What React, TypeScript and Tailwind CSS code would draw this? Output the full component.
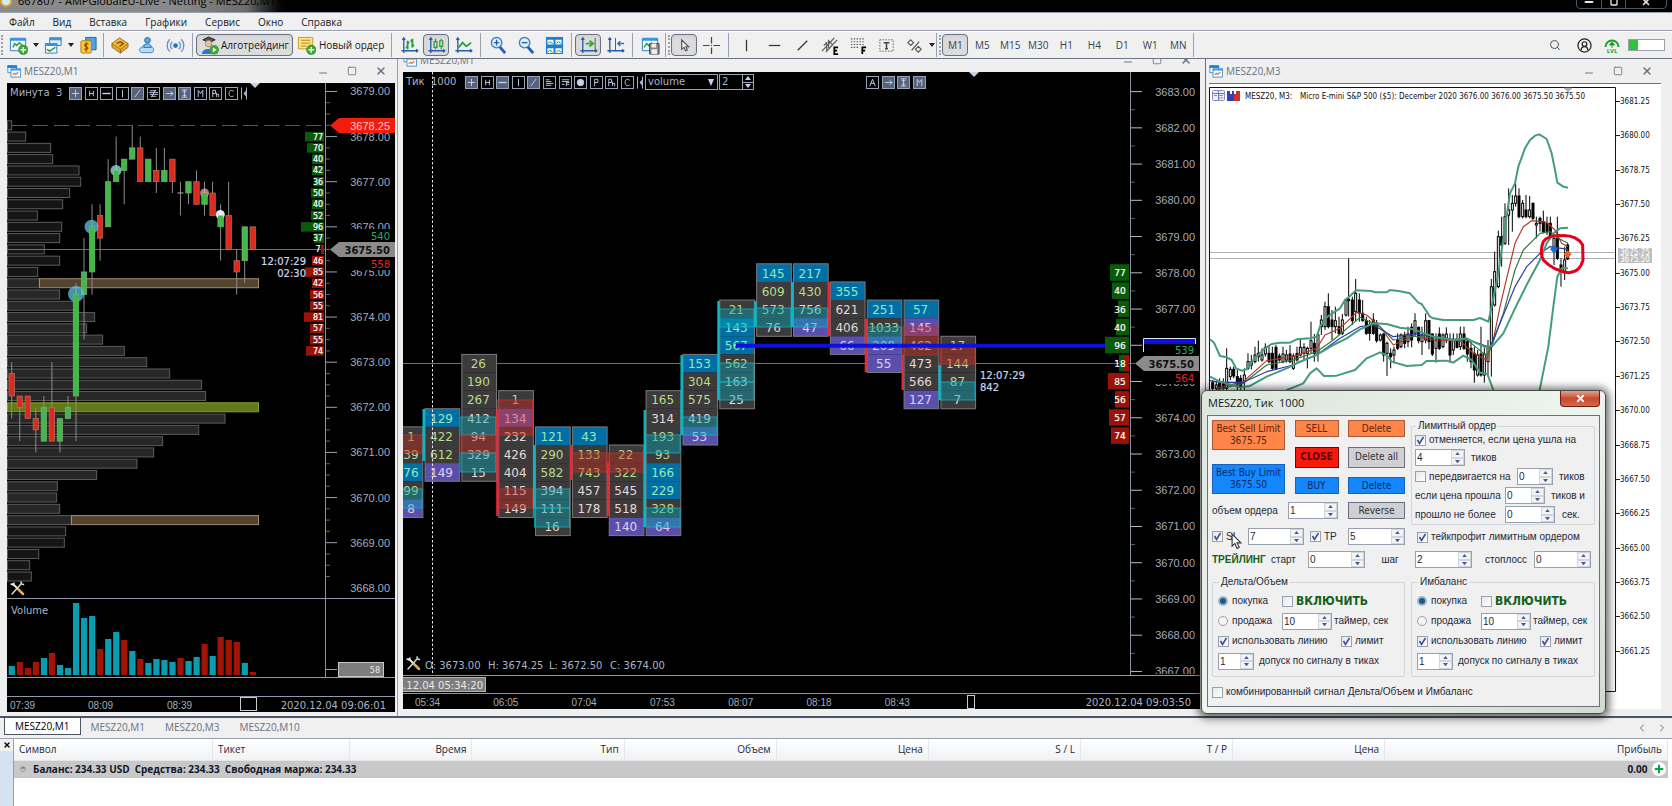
import { useState, type ReactNode } from "react";
import clsx from "clsx";
import {
  ChevronLeft,
  ChevronRight,
  Minus,
  Plus,
  Search,
  Square,
  X,
} from "lucide-react";

const menuItems = ["Файл", "Вид", "Вставка", "Графики", "Сервис", "Окно", "Справка"];
const timeframes = ["M1", "M5", "M15", "M30", "H1", "H4", "D1", "W1", "MN"];
const chartTabs = ["MESZ20,M1", "MESZ20,M1", "MESZ20,M3", "MESZ20,M10"];

const MONO = "DejaVu Sans, sans-serif";
const AXIS = "Liberation Sans, sans-serif";
const SMALL = "DejaVu Sans Condensed, DejaVu Sans, sans-serif";

/* ---------- left chart data (one unit = one quarter tick below 3678.25) ---------- */

const tickY = (i: number) => 125.3 + 11.28 * i;

const profile = [
  35, 77, 152, 158, 237, 242, 209, 188, 112, 185, 179, 133, 179, 113, 118, 179, 225, 284, 260, 308,
  373, 440, 509, 605, 617, 0, 675, 596, 488, 461, 411, 290, 172, 170, 179, 214, 197, 193, 116, 89, 94,
];

// high, body top, body bottom, low, up?
const candles: [number, number, number, number, number][] = [
  [21, 22, 24, 26, 0], [24, 24, 25, 28, 0], [24, 24, 26, 26, 0], [25, 26, 27, 29, 0],
  [24, 25, 28, 28, 1], [21, 25, 28, 28, 0], [26, 26, 28, 29, 1], [24, 25, 26, 26, 1],
  [14, 15, 24, 28, 1], [10, 13, 15, 19, 1], [7, 9, 13, 15, 1], [7, 8, 10, 12, 0],
  [3, 5, 9, 9, 1], [1, 4, 5, 5, 1], [3, 3, 4, 7, 1], [0, 2, 3, 3, 1],
  [1, 2, 5, 5, 0], [3, 3, 5, 5, 1], [2, 4, 5, 6, 0], [2, 4, 5, 5, 1],
  [3, 3, 5, 6, 0], [5, 6, 6, 8, 1], [5, 5, 6, 7, 1], [4, 5, 7, 7, 0],
  [5, 6, 7, 8, 1], [5, 6, 8, 8, 0], [7, 8, 9, 12, 1], [5, 8, 11, 11, 0],
  [11, 12, 13, 15, 0], [9, 9, 12, 14, 1], [9, 9, 11, 11, 0],
];

const volumes = [
  9, -13, -7, -13, 17, -22, 10, 7, 72, 57, 59, -26, 36, 43, -35, 24, -16, 12, 16, 15, 13, -17, 14,
  18, -31, 19, -38, -35, -33, 12, -3,
];

const leftBook: [string, number, number][] = [
  ["77", 19, 1], ["70", 17, 1], ["40", 12, 1], ["42", 12, 1], ["36", 10, 1], ["50", 13, 1],
  ["40", 12, 1], ["52", 13, 1], ["96", 23, 1], ["37", 10, 1], ["7", 3, 0], ["46", 12, 0],
  ["85", 19, 0], ["42", 12, 0], ["56", 14, 0], ["55", 14, 0], ["81", 20, 0], ["57", 14, 0],
  ["55", 14, 0], ["74", 18, 0],
];

/* ---------- middle chart data ---------- */

const rowY = (k: number) => 91.6 + 18.12 * k;
const colX = (i: number) => 425 + 36.85 * (i - 1);

// start row, cells (value + b: blue, p: purple, g: green text, w: white text)
const clusters: [number, string][] = [
  [19, "1g 39g 76b 99g 8p"],
  [18, "129b 422g 612g 149p"],
  [15, "26g 190g 267g 412w 94w 329w 15w"],
  [17, "1g 134p 232w 426w 404w 115w 149w"],
  [19, "121b 290g 582g 394w 111w 16w"],
  [19, "43b 133g 743g 457w 178w"],
  [20, "22g 322g 545w 518w 140p"],
  [17, "165g 314w 193g 93g 166b 229b 328g 64p"],
  [15, "153b 304g 575g 419w 53p"],
  [12, "21g 143b 567b 562g 163w 25w"],
  [10, "145b 609g 573g 76w"],
  [10, "217b 430g 756w 47p"],
  [11, "355b 621w 406w 66p"],
  [12, "251b 1033g 209p 55p"],
  [12, "57b 145p 462w 473w 566w 127p"],
  [14, "17g 144g 87g 7w"],
];

// column, y1, y2, buy?
const zones: [number, number, number, number][] = [
  [0, 435, 453, 0], [0, 489, 508, 1],
  [2, 417, 435, 1], [2, 435, 453, 0], [2, 453, 472, 1],
  [3, 400, 435, 0], [3, 489, 508, 0],
  [4, 489, 508, 1], [4, 508, 527, 1],
  [5, 453, 472, 0], [6, 453, 472, 0],
  [7, 435, 453, 1], [7, 508, 527, 1],
  [8, 417, 435, 1],
  [9, 309, 327, 1], [9, 363, 382, 1], [9, 382, 400, 1],
  [10, 308, 327, 1], [11, 308, 327, 1],
  [13, 327, 345, 1], [14, 327, 355, 0],
  [15, 346, 364, 0], [15, 382, 400, 1],
];

const deltaBars: [number, number, number, number][] = [
  [1, 409, 461, 1], [3, 410, 516, 0], [4, 445, 508, 1], [5, 445, 480, 0], [6, 463, 516, 0],
  [7, 410, 527, 1], [8, 355, 435, 1], [9, 301, 400, 1], [10, 301, 327, 1], [11, 282, 327, 1],
  [12, 282, 336, 0], [13, 319, 372, 0], [14, 355, 390, 0], [15, 365, 400, 1],
];

const midBook: [string, number, number][] = [
  ["77", 19, 1], ["40", 17, 1], ["36", 11, 1], ["40", 13, 1], ["96", 24, 1], ["18", 10, 1],
  ["85", 21, 0], ["56", 14, 0], ["57", 20, 0], ["74", 18, 0],
];

/* ---------- right chart data ---------- */

// x, high, body top, body bottom, low, filled
const bars: number[][] = [
  [38, 960, 968, 985, 990, 1], [49, 965, 975, 985, 995, 0], [59, 955, 970, 985, 995, 1], [70, 955, 968, 985, 1000, 1],
  [80, 865, 925, 985, 990, 0], [91, 920, 928, 950, 960, 0], [101, 920, 928, 948, 955, 1], [112, 930, 950, 975, 990, 1],
  [122, 945, 955, 980, 990, 1], [133, 925, 945, 965, 990, 0], [144, 880, 905, 925, 930, 0], [154, 885, 905, 915, 928, 0],
  [165, 860, 885, 905, 910, 0], [175, 842, 880, 890, 905, 0], [186, 865, 885, 900, 905, 0], [196, 850, 862, 882, 890, 0],
  [207, 855, 880, 905, 910, 1], [217, 860, 880, 925, 930, 1], [228, 855, 862, 925, 930, 1], [238, 880, 888, 900, 905, 1],
  [249, 860, 882, 905, 910, 0], [259, 870, 885, 900, 908, 0], [270, 855, 882, 905, 910, 1], [280, 880, 888, 925, 930, 0],
  [291, 860, 880, 900, 905, 1], [301, 840, 862, 885, 890, 0], [312, 850, 862, 880, 900, 0], [322, 860, 865, 880, 925, 0],
  [333, 785, 842, 865, 880, 0], [343, 822, 850, 880, 905, 1], [354, 820, 825, 880, 905, 0], [364, 765, 780, 800, 825, 0],
  [375, 725, 740, 800, 810, 0], [385, 700, 740, 800, 805, 1], [396, 750, 780, 800, 840, 1], [406, 740, 782, 800, 820, 0],
  [417, 770, 800, 820, 825, 1], [427, 762, 780, 820, 825, 0], [438, 715, 720, 765, 770, 0], [446, 595, 718, 722, 770, 0],
  [457, 710, 720, 782, 795, 1], [467, 657, 700, 755, 785, 0], [478, 700, 720, 760, 785, 1], [488, 720, 760, 782, 785, 1],
  [499, 770, 782, 820, 825, 1], [509, 780, 795, 820, 842, 1], [520, 760, 780, 820, 825, 1], [530, 780, 790, 842, 848, 1],
  [541, 820, 825, 840, 845, 0], [551, 820, 822, 885, 905, 1], [561, 845, 850, 880, 948, 0], [572, 865, 880, 890, 925, 1],
  [582, 860, 870, 885, 910, 0], [593, 820, 840, 865, 870, 1], [603, 820, 825, 860, 865, 0], [614, 815, 825, 850, 865, 1],
  [624, 800, 822, 845, 862, 0], [635, 790, 802, 840, 862, 1], [645, 760, 782, 820, 830, 0], [656, 800, 802, 842, 850, 1],
  [666, 800, 825, 845, 885, 0], [677, 760, 782, 840, 850, 0], [687, 780, 782, 845, 868, 1], [697, 820, 822, 882, 888, 1],
  [708, 820, 840, 865, 908, 0], [718, 802, 822, 865, 870, 1], [729, 820, 825, 860, 865, 0], [739, 802, 822, 842, 850, 0],
  [750, 820, 845, 885, 908, 1], [760, 820, 842, 870, 885, 0], [771, 820, 842, 862, 865, 1], [781, 800, 822, 860, 870, 0],
  [792, 800, 822, 865, 870, 1], [802, 840, 845, 882, 905, 1], [813, 845, 865, 905, 925, 1], [823, 860, 880, 930, 968, 1],
  [833, 870, 885, 945, 950, 0], [843, 800, 882, 945, 950, 1], [853, 862, 882, 945, 968, 0], [864, 840, 862, 905, 945, 0],
  [874, 657, 680, 860, 950, 0], [884, 575, 635, 735, 740, 0], [895, 512, 530, 680, 685, 0], [905, 470, 530, 555, 620, 1],
  [915, 430, 470, 550, 555, 0], [926, 385, 450, 465, 555, 0], [937, 405, 430, 450, 515, 0], [947, 370, 408, 430, 440, 0],
  [957, 385, 408, 470, 475, 1], [968, 420, 430, 470, 475, 0], [978, 405, 450, 470, 475, 1], [989, 408, 450, 470, 475, 0],
  [999, 428, 430, 475, 480, 1], [1009, 470, 490, 495, 535, 0], [1020, 470, 475, 490, 515, 1], [1030, 452, 485, 515, 520, 1],
  [1041, 470, 490, 515, 525, 1], [1051, 470, 490, 530, 538, 1], [1062, 530, 535, 560, 615, 0], [1072, 470, 535, 595, 600, 1],
  [1083, 595, 615, 630, 680, 1], [1094, 560, 600, 635, 660, 0], [1103, 550, 555, 597, 600, 1],
];

/* ---------- small pieces ---------- */

const Sep = ({ tight }: { tight?: boolean }) => (
  <span className={clsx("h-6 w-px shrink-0 bg-gray-400", tight ? "mx-px" : "mx-[3px]")} />
);

const Grip = () => (
  <span className="mx-px h-5 w-px shrink-0 border-l-2 border-dotted border-gray-400" />
);

const Tool = ({ label, active, children }: { label: string; active?: boolean; children: ReactNode }) => (
  <button
    aria-label={label}
    className={clsx(
      "flex h-[22px] shrink-0 items-center justify-center",
      active ? "w-[26px] rounded-sm border border-gray-500 bg-[#dcdcdc] shadow-inner" : "w-7"
    )}
  >
    {children}
  </button>
);

const Caret = ({ label }: { label: string }) => (
  <button aria-label={label} className="flex w-[7px] shrink-0 items-center justify-center">
    <svg viewBox="0 0 6 4" className="w-[6px]"><path d="M0 0h6L3 4z" fill="#222" /></svg>
  </button>
);

const Ico = ({ children }: { children: ReactNode }) => (
  <svg viewBox="0 0 20 20" className="size-[19px]" fill="none">{children}</svg>
);

const PlusBadge = () => (
  <>
    <circle cx="15" cy="14.5" r="5" fill="#3fa535" stroke="#2a7d22" strokeWidth=".6" />
    <path d="M15 11.5v6M12 14.5h6" stroke="#fff" strokeWidth="1.6" />
  </>
);

const Axes = () => (
  <path d="M4 2v16M1.500 15.500h17M2.500 4 4 2l1.500 2M17 14l1.700 1.500L17 17" stroke="#2a5bab" strokeWidth="1.400" />
);

const WindowIcon = () => (
  <svg viewBox="0 0 16 16" className="size-[14px] shrink-0" fill="none">
    <path d="M1 2h10v8H1z" fill="#fff" stroke="#2b8ad2" />
    <path d="M.5 1.500h11v3H.5z" fill="#1f7fcf" />
    <path d="M4.500 6h11v9h-11z" fill="#fff" stroke="#2b8ad2" />
    <path d="M4 5h12v2.500H4z" fill="#3d9be0" />
    <path d="m6.500 12.500 2-2 1.500 1.500 3-3" stroke="#e0662c" strokeWidth="1.300" />
  </svg>
);

const Wrench = ({ x, y }: { x: number; y: number }) => (
  <g transform={`translate(${x} ${y})`} fill="none" strokeLinecap="round">
    <path d="M3 3 8 8" stroke="#e8e8e8" strokeWidth="2" />
    <path d="m1 3 2 1 1-2" stroke="#e8e8e8" strokeWidth="1.500" />
    <path d="m8 8 5 5" stroke="#e2b050" strokeWidth="2.500" />
    <path d="M2 13 11 3M11 1l.5 2 2 .5" stroke="#d8d8d8" strokeWidth="1.500" />
  </g>
);

function WindowTitle({ title, clipped }: { title: string; clipped?: boolean }) {
  return (
    <div className={clsx("flex items-end overflow-hidden bg-[#efefef]", clipped ? "h-[13px]" : "h-6")}>
      <div className="flex h-6 w-full shrink-0 items-center gap-[3px] pr-2 pb-px text-[10px] leading-4 text-gray-500">
        <WindowIcon />
        <span className="flex-1">{title}</span>
        <div className="flex items-center gap-[18px] text-gray-500">
          <button aria-label="Свернуть окно"><Minus className="size-3 translate-y-0.5" /></button>
          <button aria-label="Развернуть окно"><Square className="size-[10px]" /></button>
          <button aria-label="Закрыть окно"><X className="size-3" strokeWidth={3} /></button>
        </div>
      </div>
    </div>
  );
}

const chipGlyphs: Record<string, ReactNode> = {
  plus: <path d="M6 2v8M2 6h8" />,
  H: <path d="M4 3v6M8 3v6M4 6h4" />,
  h: <path d="M1.500 6h9" strokeWidth="1.500" />,
  v: <path d="M6 2v8" />,
  d: <path d="m3 10 6-8" />,
  lines: <path d="M2 3h4M2 5h6M2 7h8M2 9h6" />,
  fibo: <path d="M2 3h8M2 5h8M2 8h3M7 10V6h3M7 8h3" />,
  level: <path d="M2 3h7M1 5h10M2 7h9M3 9h6M8 2 4 10" />,
  dot: <circle cx="6" cy="6" r="3.500" fill="currentColor" />,
  arrow: <path d="M2 6h8M7 3.500 10 6 7 8.500" />,
  I: <path d="M3 2h6M3 10h6M6 2v8M4 4h4M4 8h4" />,
  M: <path d="M3.500 10V2.500L6 6l2.500-3.500V10" />,
  P: <path d="M4 10V2.500h3.500V6H4" />,
  Ph: <path d="M3 10V2.500h3V6H3M7 5v5M7 7h2.500v3" />,
  C: <path d="M8.500 3.500C4 1 3 4.500 3.500 7c.5 3 3.500 3 5 1.500" />,
  A: <path d="m3 10 3-7.500L9 10M4 7h4" />,
};

function Chip({ kind, on }: { kind: string; on?: boolean }) {
  return (
    <button
      aria-label={`Инструмент ${kind}`}
      className={clsx(
        "flex size-[13px] shrink-0 items-center justify-center border border-[#98a4b8] text-[#c4d2ea]",
        on ? "bg-[#56637a]" : "bg-black"
      )}
    >
      <svg viewBox="0 0 12 12" className="size-[11px]" fill="none" stroke="currentColor">{chipGlyphs[kind]}</svg>
    </button>
  );
}

const Collapse = () => (
  <button aria-label="Свернуть панель" className="ml-[3px] shrink-0">
    <svg viewBox="0 0 6 12" className="h-[13px] w-[6px]" fill="#a9b4c8">
      <path d="M0 0h1v12H0zM5 3v6L2.500 6z" /><path d="M5 0h1v12H5z" />
    </svg>
  </button>
);

/* ---------- charts ---------- */

function PriceTag({ x, y, w, text }: { x: number; y: number; w: number; text: string }) {
  return (
    <>
      <path d={`M${x} ${y}l9-7.500h${w - 9}v15h-${w - 9}z`} fill="#8b8b8b" />
      <text x={x + w - 5} y={y + 4} textAnchor="end" fontFamily={MONO} fontSize="10" fontWeight="bold" fill="#111">{text}</text>
    </>
  );
}

function ProfileChart() {
  return (
    <svg viewBox="7 83 388 629" className="block w-full bg-black">
      {profile.map((w, i) =>
        w ? (
          <rect key={i} x="7.500" y={tickY(i) - 4.500} width={w / 3 - 7.500} height="9"
            fill={i > 13 && i < 36 ? "#272727" : "#151515"} stroke="#5c5c5c" />
        ) : null
      )}
      <rect x="39.500" y={tickY(14) - 4.500} width="219" height="9" fill="#54432f" stroke="#a58c6c" />
      <rect x="71.500" y={tickY(35) - 4.500} width="187" height="9" fill="#54432f" stroke="#a58c6c" />
      <rect x="7.500" y={tickY(25) - 4.500} width="251" height="9" fill="#5f7a17" stroke="#84a529" />
      <path d="M12 125.500H326" stroke="#c52a20" strokeDasharray="15 6" />
      <path d="M7 249.500H330" stroke="#6b6f78" />
      {candles.map(([h, t, b, l, up], i) => {
        const x = 11.700 + i * 8.035;
        return (
          <g key={i}>
            <path d={`M${x} ${tickY(h)}V${tickY(l)}`} stroke="#8c8c8c" />
            {t === b ? (
              <path d={`M${x - 3} ${tickY(t)}h6`} stroke="#b0b0b0" />
            ) : (
              <rect x={x - 2.700} y={tickY(t)} width="5.400" height={tickY(b) - tickY(t)}
                fill={up ? "#44b64a" : "#dc2a1c"} stroke={up ? "#7fae80" : "#a87868"} strokeWidth=".7" />
            )}
          </g>
        );
      })}
      <g fill="#62c4dc" fillOpacity=".75">
        <circle cx="76" cy={tickY(15) - 0.5} r="8" />
        <circle cx="91.500" cy={tickY(9)} r="7" />
        <circle cx="116" cy={tickY(4)} r="5.500" fill="#a4e0e8" />
        <circle cx="204.600" cy={tickY(6)} r="4.500" fill="#eba4a0" />
        <circle cx="220.300" cy={tickY(8) - 1} r="4.500" fill="#fff" fillOpacity=".9" />
      </g>
      {[[8, 15, 24], [10, 9, 13], [13, 4, 5], [24, 6, 7], [26, 8, 9]].map(([i, t, b]) => (
        <rect key={i} x={9 + i * 8.035} y={tickY(t)} width="5.400" height={tickY(b) - tickY(t)} fill="#44b64a" />
      ))}
      <g fontFamily={MONO} fontSize="9" fill="#fff" textAnchor="middle">
        {leftBook.map(([v, w, buy], i) => (
          <g key={i}>
            <rect x={324 - w} y={tickY(i + 1) - 4.700} width={w} height="9.500" fill={buy ? "#0b5a0b" : "#9a1208"} />
            <text x="318" y={tickY(i + 1) + 3} fontSize="8" stroke="#fff" strokeWidth=".2">{v}</text>
          </g>
        ))}
      </g>
      <g fontFamily={MONO} fontSize="10" fill="#c8d6ee" textAnchor="end" stroke="#c8d6ee" strokeWidth=".2">
        <text x="306" y="265">12:07:29</text>
        <text x="306" y="276.500">02:30</text>
      </g>
      <path d="M325.500 83V677" stroke="#8891a5" />
      {Array.from({ length: 44 }, (_, i) => i - 3).map((i) => (
        <path key={i} d={`M326 ${tickY(i)}h${(i - 1) % 4 ? 4 : 11}`} stroke={(i - 1) % 4 ? "#5a6070" : "#9aa2b4"} />
      ))}
      <g fontFamily={AXIS} fontSize="11" fill="#a3abbd" textAnchor="end">
        {Array.from({ length: 12 }, (_, i) => (
          <text key={i} x="390" y={tickY(1) + (i - 1) * 45.12 + 4}>{`${3679 - i}.00`}</text>
        ))}
        <rect x="345" y="229" width="50" height="13" fill="#000" />
        <rect x="345" y="257" width="50" height="13" fill="#000" />
        <path d="M330 125.500l9-7.500h56v15h-56z" fill="#f01c0c" />
        <text x="390" y="129.500" fill="#ffc8c0">3678.25</text>
        <text x="390" y="240" fontFamily={MONO} fontSize="10" fill="#22b060">540</text>
        <text x="390" y="268" fontFamily={MONO} fontSize="10" fill="#e0281c">558</text>
      </g>
      <PriceTag x={330} y={249.500} w={65} text="3675.50" />
      <path d="M250 83h10l-5 5z" fill="#c4d2ea" />
      <Wrench x={10} y={581} />
      <path d="M7 598.500H395M7 677.500H395M7 696.500H395" stroke="#9098aa" />
      <text x="11" y="614" fontFamily={MONO} fontSize="10" fill="#a9b4c8">Volume</text>
      {volumes.map((v, i) => (
        <rect key={i} x={8.700 + i * 8.035} y={675 - Math.abs(v)} width="6.200" height={Math.abs(v)}
          fill={v > 0 ? "#0a9cb0" : "#a2140a"} />
      ))}
      <path d="M326 669.500h11" stroke="#9aa2b4" />
      <rect x="338.500" y="662.500" width="45" height="14" fill="#7d7d7d" stroke="#c8c8c8" />
      <text x="380" y="673" textAnchor="end" fontFamily={MONO} fontSize="8" fill="#e8e8e8">58</text>
      <g fontFamily={AXIS} fontSize="10" fill="#a3abbd">
        <text x="10" y="708.500">07:39</text>
        <text x="88" y="708.500">08:09</text>
        <text x="167" y="708.500">08:39</text>
      </g>
      <rect x="240.500" y="697.500" width="16" height="13" stroke="#c4ccdc" fill="none" />
      <text x="386" y="709" textAnchor="end" fontFamily={MONO} fontSize="10" fill="#a9b4c8">2020.12.04 09:06:01</text>
    </svg>
  );
}

const cellFill: Record<string, string> = { b: "#006fa6", p: "#5a50ac", g: "#3d3a3c", w: "#3d3a3c" };
const cellText: Record<string, string> = { b: "#90ecb8", p: "#e0d0f0", g: "#b8dc88", w: "#e4d8d8" };

function ClusterChart() {
  return (
    <svg viewBox="403 72 797 637" className="block w-full bg-black">
      <path d="M403 363.500H1135" stroke="#6b6f78" />
      {clusters.map(([start, cells], i) => {
        const list = cells.split(" ");
        const x = colX(i);
        return (
          <g key={i}>
            {list.map((cell, j) => (
              <rect key={j} x={x} y={rowY(start + j) - 9} width="34.700" height="18.200" fill={cellFill[cell.slice(-1)]} />
            ))}
            <rect x={x} y={rowY(start) - 9} width="34.700" height={list.length * 18.12} fill="none" stroke="#7a7a7a" />
            {list.map((cell, j) => (
              <text key={j} x={i ? x + 16.500 : 411} y={rowY(start + j) + 4.800} textAnchor="middle"
                fontFamily={MONO} fontSize="12" fill={cellText[cell.slice(-1)]}>{cell.slice(0, -1)}</text>
            ))}
          </g>
        );
      })}
      {zones.map(([c, y1, y2, buy], i) => (
        <rect key={i} x={colX(c) - 1} y={y1} width="35" height={y2 - y1} fillOpacity=".42" strokeOpacity=".8"
          fill={buy ? "#04a8b4" : "#cc2c1c"} stroke={buy ? "#12b4c4" : "#c4302c"} />
      ))}
      {deltaBars.map(([c, y1, y2, buy], i) => (
        <rect key={i} x={colX(c) - 2.500} y={y1} width="2.500" height={y2 - y1} fill={buy ? "#12b4c4" : "#e02c38"} />
      ))}
      <path d="M736 345.700H1106" stroke="#0a10e0" strokeWidth="4" />
      <path d="M432.500 72V675" stroke="#e8e8e8" strokeDasharray="2.500 2" />
      <g fontFamily={MONO} fontSize="10" fill="#c8d6ee" stroke="#c8d6ee" strokeWidth=".2">
        <text x="980" y="379">12:07:29</text>
        <text x="980" y="390.500">842</text>
      </g>
      <g fontFamily={MONO} fontSize="9" fill="#fff" stroke="#fff" strokeWidth=".2" textAnchor="middle">
        {midBook.map(([v, w, buy], i) => (
          <g key={i}>
            <rect x={1129 - w} y={rowY(10 + i) - 8.500} width={w} height="16.500" fill={buy ? "#0b5a0b" : "#9a1208"} stroke="none" />
            {i === 5 && <rect x="1124" y={rowY(15) - 8.500} width="5" height="16.500" fill="#9a1208" stroke="none" />}
            <text x="1120" y={rowY(10 + i) + 3.500}>{v}</text>
          </g>
        ))}
      </g>
      <path d="M1130.500 72V675" stroke="#8891a5" />
      {Array.from({ length: 33 }, (_, i) => (
        <path key={i} d={`M1131 ${rowY(i)}h${i % 2 ? 4 : 11}`} stroke={i % 2 ? "#5a6070" : "#b4bccc"} />
      ))}
      <g fontFamily={AXIS} fontSize="11" fill="#a3abbd" textAnchor="end">
        {Array.from({ length: 17 }, (_, i) => (
          <text key={i} x="1195" y={rowY(2 * i) + 4}>{`${3683 - i}.00`}</text>
        ))}
        <rect x="1143" y="338" width="54" height="18" fill="#000" />
        <path d="M1143.500 352V338.500H1195.500V344" stroke="#e0e4f0" fill="none" />
        <rect x="1144" y="339" width="51" height="5" fill="#0a10e0" />
        <rect x="1150" y="371" width="49" height="13" fill="#000" />
        <text x="1194" y="354" fontFamily={MONO} fontSize="10" fill="#22b060">539</text>
        <text x="1194" y="381.500" fontFamily={MONO} fontSize="10" fill="#e0281c">564</text>
      </g>
      <PriceTag x={1135} y={363.500} w={64} text="3675.50" />
      <rect x="1132" y="674" width="70" height="3" fill="#000" />
      <path d="M969 72h10l-5 5z" fill="#c4d2ea" />
      <Wrench x={406} y={656} />
      <g fontFamily={MONO} fontSize="10" fill="#a9b4c8">
        <text x="425" y="668.500">O: 3673.00</text>
        <text x="488" y="668.500">H: 3674.25</text>
        <text x="549" y="668.500">L: 3672.50</text>
        <text x="610" y="668.500">C: 3674.00</text>
      </g>
      <path d="M403 675.500H1200M403 693.500H1200" stroke="#9098aa" />
      <rect x="402.500" y="677.500" width="83" height="14" fill="#7d7d7d" stroke="#b4b4b4" />
      <text x="483" y="688.500" textAnchor="end" fontFamily={MONO} fontSize="10" fill="#e8e8e8">.12.04 05:34:20</text>
      <g fontFamily={AXIS} fontSize="10" fill="#a3abbd">
        {["05:34", "06:05", "07:04", "07:53", "08:07", "08:18", "08:43"].map((t, i) => (
          <text key={t} x={415 + i * 78.3} y="705.500">{t}</text>
        ))}
      </g>
      <rect x="967.500" y="695.500" width="7" height="13" stroke="#c4ccdc" fill="none" />
      <text x="1191" y="706" textAnchor="end" fontFamily={MONO} fontSize="10" fill="#a9b4c8">2020.12.04 09:03:50</text>
    </svg>
  );
}

function BandsChart() {
  return (
    <svg viewBox="1209 87 452 622" className="block w-full bg-white">
      <path d="M1209.500 692V87.500H1615.500V691.500H1209" fill="none" stroke="#111" />
      <path d="M1210 252.500H1615M1210 258.500H1615" stroke="#b0b0b0" />
      <g transform="translate(1200 60) scale(.33333)" fill="none">
        {bars.map(([x, h, t, b, l, f]) => (
          <g key={x} stroke="#000" strokeWidth="3">
            <path d={`M${x} ${h}V${l}`} />
            <rect x={x - 3} y={t} width="6" height={Math.max(b - t, 1)} fill={f ? "#000" : "#fff"} />
          </g>
        ))}
        <g strokeWidth="3.500" strokeLinejoin="round">
          <path stroke="#b03a2a" d="M50 985L130 965 200 902 280 890 350 865 375 825 420 805 470 757 500 765 540 800 580 855 640 828 700 840 780 842 820 880 860 900 880 840 900 740 945 550 970 500 995 482 1040 487 1065 510 1085 550 1104 560" />
          <path stroke="#2f7a3c" d="M50 990L130 970 200 915 280 900 350 875 400 840 480 772 540 800 580 840 640 828 760 840 800 838 860 888 880 845 910 760 945 630 970 570 1020 520 1050 515 1075 535 1104 550" />
          <path stroke="#2f3aa8" d="M30 962L60 967 130 967 200 935 280 915 350 885 420 835 480 800 520 795 580 830 650 822 760 838 800 838 870 862 900 790 945 680 980 620 1020 580 1050 560 1104 568" />
        </g>
        <g stroke="#459c7c" strokeWidth="6" strokeLinejoin="round">
          <path d="M30 838L42 848 60 888 80 892 95 900 108 925 125 932 140 928 155 905 175 885 195 865 215 852 240 848 270 848 290 838 330 835 350 830 360 800 380 772 400 758 420 745 435 720 450 708 468 691 515 693 525 697 560 697 570 690 600 694 630 700 655 728 665 732 690 770 700 775 730 780 820 780 840 774 865 785 875 740 885 690 895 640 915 500 930 400 945 370 955 320 975 265 990 240 1005 227 1018 223 1040 237 1055 280 1065 330 1072 368 1090 380 1104 383" />
          <path d="M30 950L60 965 120 982 150 978 200 950 260 925 300 905 350 885 400 855 440 835 480 808 520 790 560 792 600 803 640 808 700 830 760 840 800 835 830 850 860 862 880 855 910 820 945 745 985 665 1020 600 1040 550 1060 520 1080 505 1104 503" />
          <path d="M235 1010L265 988 310 970 330 940 350 925 372 948 410 947 465 930 500 895 540 877 560 885 575 905 620 918 665 915 680 903 740 902 760 908 790 887 815 900 840 938 862 942 880 990Q950 1250 1020 985L1045 860 1060 740 1072 650 1085 625 1104 625" />
        </g>
        <path d="M1062 556 1074 568 1062 580 1050 568z" fill="#1a6cc8" />
        <path d="M1103 571 1115 583 1103 595 1091 583z" fill="#e8622c" />
        <path stroke="#e2001a" strokeWidth="9" strokeLinejoin="round" d="M1030 545Q1045 525 1085 527Q1130 525 1148 555L1149 600Q1140 637 1105 638Q1060 632 1030 600Q1018 575 1030 545z" />
        <path d="M1090 83h28l-14 14z" fill="#b0b0b0" />
      </g>
      <g>
        <rect x="1212.500" y="90.500" width="12" height="10" rx="1" fill="#eef" stroke="#8890b8" />
        <path d="M1213 93.500h11M1218.500 91v9" stroke="#6878c0" />
        <path d="M1219 95.500h4M1219 98h4M1214 95.500h3" stroke="#d88040" />
        <path d="M1227 91h3v3h2v-3h2v10h-7z" fill="#2c44b4" />
        <path d="M1234 94h2v-3h4v10h-6z" fill="#d03030" />
      </g>
      <g fontFamily={SMALL} fontSize="8" fill="#111">
        <text x="1245" y="99">MESZ20, M3:</text>
        <text x="1300" y="99">Micro E-mini S&amp;P 500 ($5): December 2020</text>
        <text x="1585" y="99" textAnchor="end">3676.00 3676.00 3675.50 3675.50</text>
        {Array.from({ length: 17 }, (_, i) => (
          <g key={i}>
            <path d={`M1616 ${Math.round(101 + i * 34.35)}.5h4`} stroke="#222" />
            <text x="1620" y={104 + i * 34.35}>{(3681.25 - i * 1.25).toFixed(2)}</text>
          </g>
        ))}
        <rect x="1618" y="248" width="34" height="15" fill="#bfbfbf" />
        <g fill="#fff">
          <text x="1620" y="254.500">3675.75</text>
          <text x="1620" y="261.500">3675.50</text>
        </g>
      </g>
    </svg>
  );
}

/* ---------- order dialog ---------- */

function Check({ label, on = false, textClass, className }: { label: string; on?: boolean; textClass?: string; className?: string }) {
  return (
    <label className={clsx("flex items-center gap-[3px] whitespace-nowrap", className)}>
      <span className="relative block size-[11px] shrink-0">
        <input type="checkbox" defaultChecked={on} className="peer block size-[11px] appearance-none border border-gray-400 bg-gradient-to-br from-gray-200 to-white" />
        <svg viewBox="0 0 11 11" fill="none" className="pointer-events-none absolute inset-0 hidden peer-checked:block">
          <path d="M2.500 5 4.500 8.500 8.500 2" stroke="#3b4f9a" strokeWidth="1.600" />
        </svg>
      </span>
      <span className={textClass}>{label}</span>
    </label>
  );
}

function RadioItem({ label, name, on }: { label: string; name: string; on?: boolean }) {
  return (
    <label className="flex w-16 shrink-0 items-center gap-1">
      <input type="radio" name={name} defaultChecked={on}
        className="size-[10px] shrink-0 appearance-none rounded-full border border-gray-400 bg-gray-100 checked:border-2 checked:border-[#9fb4c8] checked:bg-[#1c5c8c]" />
      {label}
    </label>
  );
}

function Spin({ label, value, className }: { label: string; value: string; className: string }) {
  return (
    <span className={clsx("flex h-[17px] shrink-0 items-stretch border border-gray-400 bg-white", className)}>
      <input aria-label={label} defaultValue={value} className="w-0 min-w-0 flex-1 pl-px text-[10px] leading-none text-gray-800 outline-none" />
      <span className="flex w-[13px] flex-col">
        <button aria-label="Больше" className="flex flex-1 items-center justify-center border border-gray-300 bg-gray-100">
          <svg viewBox="0 0 6 4" className="w-[5px]"><path d="M0 4h6L3 0z" fill="#4a5a94" /></svg>
        </button>
        <button aria-label="Меньше" className="flex flex-1 items-center justify-center border border-gray-300 bg-gray-100">
          <svg viewBox="0 0 6 4" className="w-[5px]"><path d="M0 0h6L3 4z" fill="#4a5a94" /></svg>
        </button>
      </span>
    </span>
  );
}

const btn = "flex items-center justify-center border text-center font-['DejaVu_Sans_Condensed','DejaVu_Sans',sans-serif] text-[10px] leading-3 whitespace-nowrap";
const sellBtn = "border-[#a85a34] bg-[#ff8548] text-[#5a2410]";
const buyBtn = "border-[#1a62b8] bg-[#1487ff] text-[#0c2860]";
const grayBtn = "border-gray-500 bg-[#d0d0d2] text-[#303038]";

function SignalGroup({ title, id, className }: { title: string; id: string; className: string }) {
  return (
    <fieldset className={clsx("min-w-0 rounded-xs border border-gray-300 pb-[5px] pl-[5px]", className)}>
      <legend className="ml-px px-[2px] leading-3">{title}</legend>
      <div className="mt-[3px] flex h-5 items-center">
        <RadioItem name={id} label="покупка" on />
        <Check label="ВКЛЮЧИТЬ" textClass="font-['DejaVu_Sans_Condensed','DejaVu_Sans',sans-serif] text-[12px] font-bold text-[#14601c]" />
      </div>
      <div className="flex h-5 items-center">
        <RadioItem name={id} label="продажа" />
        <Spin label="таймер, сек" value="10" className="w-[50px]" />
        <span className="ml-[2px] whitespace-nowrap">таймер, сек</span>
      </div>
      <div className="flex h-5 items-center">
        <Check label="использовать линию" on className="w-[123px]" />
        <Check label="лимит" on />
      </div>
      <div className="flex h-5 items-center gap-[5px]">
        <Spin label="допуск по сигналу в тиках" value="1" className="w-9" />
        <span className="whitespace-nowrap">допуск по сигналу в тиках</span>
      </div>
    </fieldset>
  );
}

function OrderDialog() {
  return (
    <div role="dialog" aria-label="MESZ20, Тик 1000"
      className="absolute top-[331px] right-[66px] flex w-[405px] flex-col rounded-md border border-[#454b46] bg-gradient-to-br from-[#dbe5dc] via-[#eef4ee] to-[#cfdcd0] px-[5px] pb-[6px] shadow-[0_1px_8px_3px_rgba(0,0,0,0.6)]">
      <div className="flex h-6 items-start justify-between pl-px">
        <span className="pt-1 text-[11px] leading-4 text-gray-900 font-['Open_Sans',sans-serif] whitespace-pre">MESZ20, Тик  1000</span>
        <button aria-label="Закрыть" className="flex h-4 w-10 items-center justify-center rounded-b border border-t-0 border-[#702018] bg-gradient-to-b from-[#e0a090] via-[#c84830] to-[#d86848] text-white">
          <X className="size-[11px]" strokeWidth={4} />
        </button>
      </div>
      <div className="border border-gray-500 bg-[#f0f0f0] px-1 pt-1 pb-2 font-['Liberation_Sans',sans-serif] text-[10px] leading-3 text-gray-800">
        <div className="flex gap-[6px]">
          <div className="w-[193px] shrink-0">
            <div className="flex h-[74px] justify-between">
              <div className="flex w-[73px] flex-col justify-between">
                <button className={clsx(btn, sellBtn, "h-[30px] text-[9px]")}>Best Sell Limit<br />3675.75</button>
                <button className={clsx(btn, buyBtn, "h-[30px] text-[9px]")}>Best Buy Limit<br />3675.50</button>
              </div>
              <div className="flex w-11 flex-col justify-between">
                <button className={clsx(btn, sellBtn, "h-[17px]")}>SELL</button>
                <button className={clsx(btn, "h-[21px] border-[#700] bg-[#f8180c] font-bold text-[#5a0808]")}>CLOSE</button>
                <button className={clsx(btn, buyBtn, "h-[17px]")}>BUY</button>
              </div>
              <div className="flex w-[57px] flex-col justify-between">
                <button className={clsx(btn, sellBtn, "h-[17px]")}>Delete</button>
                <button className={clsx(btn, grayBtn, "h-[21px]")}>Delete all</button>
                <button className={clsx(btn, buyBtn, "h-[17px]")}>Delete</button>
              </div>
            </div>
            <div className="mt-2 flex items-center">
              <span className="w-[76px]">объем ордера</span>
              <Spin label="объем ордера" value="1" className="w-[50px]" />
              <button className={clsx(btn, grayBtn, "ml-auto h-[17px] w-[57px]")}>Reverse</button>
            </div>
            <div className="mt-[9px] flex items-center">
              <Check label="SL" on className="w-9" />
              <Spin label="SL" value="7" className="w-14" />
              <Check label="TP" on className="ml-[6px]" />
              <Spin label="TP" value="5" className="ml-auto w-[57px]" />
            </div>
          </div>
          <div className="min-w-0 flex-1">
            <fieldset className="min-w-0 rounded-xs border border-gray-300 pl-[3px]">
              <legend className="ml-px px-[2px] leading-3">Лимитный ордер</legend>
              <div className="flex h-4 items-center">
                <Check label="отменяется, если цена ушла на" on />
              </div>
              <div className="flex h-[19px] items-center gap-[6px]">
                <Spin label="тиков до отмены" value="4" className="w-[50px]" />
                <span>тиков</span>
              </div>
              <div className="flex h-[19px] items-center">
                <Check label="передвигается на" className="w-[102px]" />
                <Spin label="передвигается на" value="0" className="w-9" />
                <span className="ml-[6px]">тиков</span>
              </div>
              <div className="flex h-[19px] items-center">
                <span className="w-[90px] whitespace-nowrap">если цена прошла</span>
                <Spin label="если цена прошла" value="0" className="w-10" />
                <span className="ml-[6px] whitespace-nowrap">тиков и</span>
              </div>
              <div className="flex h-[19px] items-center">
                <span className="w-[90px] whitespace-nowrap">прошло не более</span>
                <Spin label="прошло не более" value="0" className="w-[50px]" />
                <span className="ml-[7px]">сек.</span>
              </div>
            </fieldset>
            <Check label="тейкпрофит лимитным ордером" on className="mt-[6px] pl-[6px]" />
          </div>
        </div>
        <div className="mt-[6px] flex items-center">
          <span className="w-[59px] text-[10px] font-bold text-[#14601c]">ТРЕЙЛИНГ</span>
          <span className="w-[37px]">старт</span>
          <Spin label="старт" value="0" className="w-[57px]" />
          <span className="w-[50px] text-center">шаг</span>
          <Spin label="шаг" value="2" className="w-[57px]" />
          <span className="w-[62px] pl-[13px]">стоплосс</span>
          <Spin label="стоплосс" value="0" className="w-[57px]" />
        </div>
        <div className="mt-2 flex gap-[6px]">
          <SignalGroup title="Дельта/Объем" id="delta" className="w-[193px] shrink-0" />
          <SignalGroup title="Имбаланс" id="imbalance" className="flex-1" />
        </div>
        <Check label="комбинированный сигнал Дельта/Объем и Имбаланс" className="mt-[9px]" />
      </div>
      <svg viewBox="0 0 10 15" className="pointer-events-none absolute top-[142px] left-[29px] w-[11px]">
        <path d="M1 1v11l2.500-2.500 2 4.500 2-1-2-4H9z" fill="#fff" stroke="#333" />
      </svg>
    </div>
  );
}

/* ---------- main toolbar ---------- */

function Toolbar({ frame, setFrame }: { frame: string; setFrame: (f: string) => void }) {
  return (
    <div className="flex h-[27px] items-center border-t border-white bg-[#f0f0f0]">
      <Grip />
      <Tool label="Новый график">
        <Ico>
          <path d="M1.500 2.500h16v13h-16z" fill="#f4faff" stroke="#2d7fc4" /><path d="M1 2h17v3H1z" fill="#3a94dc" />
          <path d="m4 12 2-4 2 2 3-3 3 3" stroke="#2c9a3c" strokeWidth="1.500" /><PlusBadge />
        </Ico>
      </Tool>
      <Caret label="Список графиков" />
      <Tool label="Профили">
        <Ico>
          <path d="M6 2h12v8H6z" fill="#d8ecfc" stroke="#2d7fc4" /><path d="M6 1.500h12.500v3H6z" fill="#3a94dc" />
          <path d="M1.500 8h12v10h-12z" fill="#f4faff" stroke="#2d7fc4" /><path d="M1 7.500h13v3H1z" fill="#3a94dc" />
          <path d="m3 14 3 2 6-4" stroke="#2c9a3c" strokeWidth="1.500" />
        </Ico>
      </Tool>
      <Caret label="Список профилей" />
      <Tool label="Обзор рынка">
        <Ico>
          <path d="M7 1.500h11v13H7z" fill="#4aa2e8" stroke="#1f68b0" />
          <rect x="2" y="5" width="11" height="13" rx="1.500" fill="#f8c840" stroke="#b87c10" />
          <path d="M10 8.500c-4-1.500-5 2-2.500 2.700s3 3.500-2 2.500M7.500 6.500v10" stroke="#8a4c04" strokeWidth="1.300" />
        </Ico>
      </Tool>
      <Sep tight />
      <Tool label="Маркет">
        <Ico>
          <path d="m2 8 8-6 9 6-8 9z" fill="#f0bc38" stroke="#9a6c10" /><path d="m2 8 9 6v4l-9-6zM11 14l8-6v4l-8 6z" fill="#e0a830" stroke="#8a5c08" strokeWidth=".7" />
          <path d="m7 8 4-2 3 2-4 3" stroke="#7a4c04" strokeWidth="1.500" />
        </Ico>
      </Tool>
      <Tool label="Облако">
        <Ico>
          <path d="M4 17.500c-4-1-2.500-6 .5-5.500 1-4 6-4 7-1 5-1 6.500 5 3 6.500z" fill="#b8dcf8" stroke="#3c86cc" />
          <circle cx="10" cy="4.500" r="3" fill="#5aa4e4" stroke="#2c6cb0" /><path d="M6 12c0-5 8-5 8 0z" fill="#8cc4f0" stroke="#2c6cb0" />
        </Ico>
      </Tool>
      <Tool label="Сигналы">
        <Ico>
          <circle cx="10" cy="10" r="2.500" fill="#2c6cd0" />
          <path d="M6.500 6a5.500 5.500 0 0 0 0 8M13.500 6a5.500 5.500 0 0 1 0 8M4 3.500a9 9 0 0 0 0 13M16 3.500a9 9 0 0 1 0 13" stroke="#5c94dc" strokeWidth="1.400" />
        </Ico>
      </Tool>
      <Sep />
      <button className="flex h-[22px] shrink-0 items-center gap-[2px] rounded-sm border border-gray-500 bg-[#dcdcdc] px-[3px] shadow-inner">
        <Ico>
          <path d="m3 4 6-3 7 3-6 3z" fill="#555" stroke="#222" /><circle cx="9" cy="8" r="3.500" fill="#e8c4a0" stroke="#7a5c3c" strokeWidth=".6" />
          <path d="M2 19c0-7 13-7 13 0z" fill="#2c78cc" /><circle cx="15" cy="14.500" r="5" fill="#3fa535" /><path d="m13.500 12 4 2.500-4 2.500z" fill="#fff" />
        </Ico>
        Алготрейдинг
      </button>
      <button className="ml-1 flex h-[22px] shrink-0 items-center gap-[3px]">
        <Ico>
          <path d="M1.500 1.500h15v12h-15z" fill="#fce488" stroke="#c89c20" /><path d="M4 4.500h10M4 7.500h10M4 10.500h6" stroke="#b88810" /><PlusBadge />
        </Ico>
        Новый ордер
      </button>
      <span className="w-1" />
      <Sep />
      <Tool label="Бары"><Ico><Axes /><path d="M8 5v9M6 12h2M8 7h2M13 3v9M11 5h2M13 10h2" stroke="#2c9a3c" strokeWidth="2" /></Ico></Tool>
      <Tool label="Свечи" active><Ico><Axes /><path d="M7.500 6h3v6h-3zM9 3v3M9 12v2M13.500 5h3v6h-3zM15 3v2M15 11v3" stroke="#2c9a3c" strokeWidth="1.300" /></Ico></Tool>
      <Tool label="Линия"><Ico><Axes /><path d="m5 12 4-5 4 4 5-4" stroke="#2c9a3c" strokeWidth="1.800" /></Ico></Tool>
      <Sep />
      <Tool label="Увеличить"><Ico><path d="m11 11 6 7" stroke="#2460b4" strokeWidth="3" /><circle cx="8" cy="7" r="5.500" fill="#e4f2fe" stroke="#3c80d0" strokeWidth="1.500" /><path d="M8 4v6M5 7h6" stroke="#2460b4" strokeWidth="1.500" /></Ico></Tool>
      <Tool label="Уменьшить"><Ico><path d="m11 11 6 7" stroke="#2460b4" strokeWidth="3" /><circle cx="8" cy="7" r="5.500" fill="#e4f2fe" stroke="#3c80d0" strokeWidth="1.500" /><path d="M5 7h6" stroke="#2460b4" strokeWidth="1.500" /></Ico></Tool>
      <Tool label="Плитка">
        <Ico>
          <path d="M1 1h18v18H1z" fill="#1f7fcf" /><path d="M2.500 4h6.500v5H2.500zM11 4h6.500v5H11zM2.500 13h6.500v5H2.500zM11 13h6.500v5H11z" fill="#f0faf0" />
          <path d="m3 8 2-2 3 2M12 8l2-2 3 2M3 17l2-2 3 2M12 17l2-2 3 2" stroke="#2c9a3c" />
        </Ico>
      </Tool>
      <Sep />
      <Tool label="Автопрокрутка" active><Ico><Axes /><path d="M17 2v13" stroke="#555" /><path d="M7 8h6M11 5l4 3-4 3" stroke="#3fa535" strokeWidth="2" /></Ico></Tool>
      <Tool label="Сдвиг графика"><Ico><Axes /><path d="M10 2v14" stroke="#555" /><path d="M19 8h-6M15 5.500 12.500 8l2.500 2.500" stroke="#2c6cd0" strokeWidth="1.600" /></Ico></Tool>
      <Sep />
      <Tool label="Сохранить шаблон">
        <Ico>
          <path d="M1.500 2.500h16v13h-16z" fill="#f4faff" stroke="#2d7fc4" /><path d="M1 2h17v3H1z" fill="#3a94dc" /><path d="m3 12 3-4 2 2 4-3" stroke="#2c9a3c" strokeWidth="1.500" />
          <path d="M9 8h10v11H9z" fill="#888" stroke="#444" /><path d="M11 8h5v4h-5zM11 14h6v5h-6z" fill="#eee" />
        </Ico>
      </Tool>
      <Sep tight />
      <Grip />
      <Tool label="Курсор" active><Ico><path d="M7 4v10l2.500-2 1.500 3.500 2-.8-1.500-3.400h3z" fill="#eee" stroke="#555" strokeWidth="1.200" /></Ico></Tool>
      <Tool label="Перекрестие"><Ico><path d="M10 1v7M10 12v7M1 10h7M12 10h7M9.500 10h1" stroke="#444" strokeWidth="1.300" /></Ico></Tool>
      <Sep />
      <Tool label="Вертикальная линия"><Ico><path d="M10 4v12" stroke="#333" strokeWidth="1.300" /></Ico></Tool>
      <Tool label="Горизонтальная линия"><Ico><path d="M4 10h12" stroke="#333" strokeWidth="1.300" /></Ico></Tool>
      <Tool label="Трендовая линия"><Ico><path d="M5 15 15 5" stroke="#333" strokeWidth="1.300" /></Ico></Tool>
      <Tool label="Каналы"><Ico><path d="M1 16 14 2M5 17 17 4M3 10l3-3v8M8 13V5l4 4" stroke="#555" strokeWidth="1.200" /><path d="M18 12h-4v7h4M14 15.500h3" stroke="#000" strokeWidth="1.800" /></Ico></Tool>
      <Tool label="Фибоначчи"><Ico><path d="M2 3h14M2 6h14M2 9h14M2 12h8" stroke="#555" strokeWidth="1.200" strokeDasharray="1.500 1.500" /><path d="M18 12h-4v7M14 15.500h3" stroke="#000" strokeWidth="1.800" /></Ico></Tool>
      <Tool label="Текст"><Ico><rect x="3" y="4" width="14" height="12" stroke="#555" strokeDasharray="1.500 1.500" /><path d="M7 7h6M10 7v6M8.500 13.500h3" stroke="#444" strokeWidth="1.600" /></Ico></Tool>
      <Tool label="Объекты"><Ico><path d="M6 4 9 7 6 10 3 7zM15 6 7 15" stroke="#555" strokeWidth="1.200" /><path d="m14 11 3 3-3 3-3-3z" stroke="#555" strokeWidth="1.200" /></Ico></Tool>
      <Caret label="Список объектов" />
      <Sep tight />
      <Grip />
      {timeframes.map((t) => (
        <button
          key={t}
          onClick={() => setFrame(t)}
          className={clsx(
            "flex h-[22px] shrink-0 items-center justify-center text-gray-700",
            frame === t ? "w-[26px] rounded-sm border border-gray-500 bg-[#dcdcdc] shadow-inner" : "w-7"
          )}
        >
          {t}
        </button>
      ))}
      <Sep tight />
      <div className="ml-auto flex items-center gap-3 pr-[7px]">
        <button aria-label="Поиск" className="mr-1"><Search className="size-3 text-gray-600" /></button>
        <button aria-label="Аккаунт">
          <svg viewBox="0 0 16 16" className="size-[15px]" fill="none" stroke="#222">
            <circle cx="8" cy="8" r="7" strokeWidth="1.300" /><circle cx="8" cy="6.500" r="2.500" strokeWidth="1.300" /><path d="M4.500 13c0-5 7-5 7 0" strokeWidth="1.300" />
          </svg>
        </button>
        <button aria-label="Уровень" className="flex flex-col items-center text-[6px] leading-[6px] font-bold text-green-600">
          <svg viewBox="0 0 16 11" className="w-4" fill="none" stroke="#19a02c"><path d="M1.500 10a6.500 6.500 0 0 1 13 0" strokeWidth="2" /><path d="M8 11V6M5.500 8 8 5l2.500 3z" fill="#19a02c" /></svg>
          LVL
        </button>
        <span className="-ml-1 flex h-3 w-[37px] border border-gray-400 bg-white"><span className="w-1/4 bg-[#35bf3c]" /></span>
      </div>
    </div>
  );
}

/* ---------- toolbox table ---------- */

const columns = [
  { title: "Символ", width: "w-[12%]", left: true },
  { title: "Тикет", width: "w-[8.3%]", left: true },
  { title: "Время", width: "w-[7.4%]" },
  { title: "Тип", width: "w-[9.2%]" },
  { title: "Объем", width: "w-[9.2%]" },
  { title: "Цена", width: "w-[9.2%]" },
  { title: "S / L", width: "w-[9.2%]" },
  { title: "T / P", width: "w-[9.2%]" },
  { title: "Цена", width: "w-[9.2%]" },
  { title: "Прибыль", width: "w-[17.1%]" },
];

function Toolbox() {
  return (
    <div className="flex flex-1 border-t border-gray-400 bg-white">
      <div className="flex w-[14px] shrink-0 flex-col border-r border-gray-400 bg-[#d4e2f2]">
        <button aria-label="Закрыть панель" className="flex h-3 items-center justify-center bg-[#f0f0f0]"><X className="size-2 text-black" strokeWidth={4} /></button>
      </div>
      <div className="mr-[4px] flex-1">
        <table className="w-full table-fixed border-collapse leading-4">
          <thead>
            <tr className="h-[21px] bg-gradient-to-b from-white to-[#f0f2f4]">
              {columns.map((c, i) => (
                <th key={i} className={clsx("border-r border-b border-gray-200 px-[5px] font-normal text-gray-800", c.width, c.left ? "text-left" : "text-right")}>{c.title}</th>
              ))}
            </tr>
          </thead>
          <tbody>
            <tr className="h-[18px] bg-[#c8c8c8] font-bold text-gray-900">
              <td colSpan={9} className="pl-[6px]">
                <div className="flex items-center gap-[5px]">
                  <span className="mr-[2px] size-[6px] rounded-full border border-gray-400 bg-gradient-to-b from-gray-500 to-gray-200" />
                  <span>Баланс: 234.33 USD</span>
                  <span>Средства: 234.33</span>
                  <span>Свободная маржа: 234.33</span>
                </div>
              </td>
              <td className="pr-[2px]">
                <div className="flex items-center justify-end gap-1">
                  0.00
                  <button aria-label="Добавить" className="flex size-[14px] items-center justify-center rounded-full bg-white"><Plus className="size-3 text-green-600" strokeWidth={4} /></button>
                </div>
              </td>
            </tr>
          </tbody>
        </table>
      </div>
    </div>
  );
}

export default function App() {
  const [frame, setFrame] = useState("M1");
  const [tab, setTab] = useState(0);

  return (
    <div className="flex min-h-screen flex-col overflow-hidden bg-[#f0f0f0] font-['Open_Sans','Noto_Sans',sans-serif] text-[10px] leading-4 text-gray-900">
      <header className="flex h-3 items-end justify-between overflow-hidden bg-black">
        <div className="flex h-5 w-[290px] items-center gap-[6px] bg-gradient-to-r from-[#8a8a8a] from-60% via-[#6c6c6c] via-85% to-black pb-[2px] text-[11px] whitespace-nowrap text-black">
          <span className="flex size-3 items-center justify-center rounded-full border-2 border-[#e8a820] bg-[#d8e8f8]" />
          667807 - AMPGlobalEU-Live - Netting - MESZ20,M1
        </div>
        <div className="mr-[5px] mb-[3px] flex h-4 items-end rounded-b border border-gray-600 text-gray-200">
          <button aria-label="Свернуть" className="flex h-3 w-[25px] items-center justify-center border-r border-gray-600"><Minus className="size-3" strokeWidth={4} /></button>
          <button aria-label="Развернуть" className="flex h-3 w-6 items-center justify-center border-r border-gray-600"><Square className="size-2" strokeWidth={4} /></button>
          <button aria-label="Закрыть" className="flex h-3 w-10 items-center justify-center"><X className="size-[10px]" strokeWidth={4} /></button>
        </div>
      </header>
      <nav className="flex h-[19px] items-center gap-[18px] border-t border-b border-gray-400 pl-[9px]">
        {menuItems.map((m) => (
          <button key={m}>{m}</button>
        ))}
      </nav>
      <Toolbar frame={frame} setFrame={setFrame} />

      <main className="relative grid grid-cols-[398fr_807fr_467fr] items-start border-t border-gray-500 bg-[#efefef]">
        <section className="border-r border-gray-400 pb-[4px] pr-[2px] pl-[7px]">
          <WindowTitle title="MESZ20,M1" />
          <div className="relative">
            <ProfileChart />
            <div className="absolute top-[2px] left-[3px] flex items-center text-[#a9b4c8]">
              <span className="w-[59px] font-['DejaVu_Sans',sans-serif] whitespace-pre">Минута  3</span>
              <div className="flex w-[169px] justify-between">
                <Chip kind="plus" on /><Chip kind="H" /><Chip kind="h" /><Chip kind="v" /><Chip kind="d" on />
                <Chip kind="level" /><Chip kind="arrow" on /><Chip kind="I" on /><Chip kind="M" /><Chip kind="Ph" /><Chip kind="C" />
              </div>
              <Collapse />
            </div>
          </div>
        </section>

        <section className="px-[5px]">
          <WindowTitle title="MESZ20,M1" clipped />
          <div className="relative">
            <ClusterChart />
            <div className="absolute top-[2px] left-[3px] flex items-center text-[#a9b4c8]">
              <span className="w-[59px] font-['DejaVu_Sans',sans-serif] whitespace-pre">Тик  1000</span>
              <div className="flex w-[169px] justify-between">
                <Chip kind="plus" on /><Chip kind="H" /><Chip kind="h" on /><Chip kind="v" /><Chip kind="d" on />
                <Chip kind="lines" /><Chip kind="fibo" /><Chip kind="dot" /><Chip kind="P" /><Chip kind="Ph" /><Chip kind="C" />
              </div>
              <Collapse />
              <div className="relative ml-[2px]">
                <select aria-label="Режим" className="block h-4 w-[73px] appearance-none border border-[#98a4b8] bg-black pl-[2px] font-['DejaVu_Sans',sans-serif] text-[10px] leading-3 text-[#a9b4c8]">
                  <option>volume</option>
                  <option>delta</option>
                </select>
                <svg viewBox="0 0 6 7" className="pointer-events-none absolute top-[5px] right-[4px] w-[6px]"><path d="M0 0h6L3 7z" fill="#c4d2ea" /></svg>
              </div>
              <span className="ml-px flex h-4 w-[35px] border border-[#98a4b8]">
                <input aria-label="Шаг" defaultValue="2" className="w-0 min-w-0 flex-1 bg-black pl-[2px] font-['DejaVu_Sans',sans-serif] text-[10px]" />
                <span className="flex w-[11px] flex-col border-l border-[#98a4b8]">
                  <button aria-label="Больше" className="flex flex-1 items-center justify-center border-b border-[#98a4b8]"><svg viewBox="0 0 6 4" className="w-[6px]"><path d="M0 4h6L3 0z" fill="#c4d2ea" /></svg></button>
                  <button aria-label="Меньше" className="flex flex-1 items-center justify-center"><svg viewBox="0 0 6 4" className="w-[6px]"><path d="M0 0h6L3 4z" fill="#c4d2ea" /></svg></button>
                </span>
              </span>
              <div className="ml-[112px] flex w-[60px] justify-between">
                <Chip kind="A" /><Chip kind="arrow" on /><Chip kind="I" on /><Chip kind="M" on />
              </div>
            </div>
          </div>
        </section>

        <section className="border-l border-gray-500 pr-[11px] pl-[3px]">
          <WindowTitle title="MESZ20,M3" />
          <div className="border-t border-gray-500 bg-white pt-[3px]">
            <BandsChart />
          </div>
        </section>

        <OrderDialog />
      </main>

      <div className="flex h-[22px] items-start border-t-2 border-gray-600 pl-1">
        {chartTabs.map((t, i) => (
          <button
            key={i}
            onClick={() => setTab(i)}
            className={clsx(
              "h-[17px] px-[10px] leading-4",
              tab === i ? "border border-t-0 border-gray-600 bg-white text-black" : "text-gray-500"
            )}
          >
            {t}
          </button>
        ))}
        <div className="ml-auto flex h-full items-center gap-2 pr-1 text-gray-500">
          <button aria-label="Влево"><ChevronLeft className="size-3" /></button>
          <button aria-label="Вправо"><ChevronRight className="size-3" /></button>
        </div>
      </div>

      <Toolbox />
    </div>
  );
}
